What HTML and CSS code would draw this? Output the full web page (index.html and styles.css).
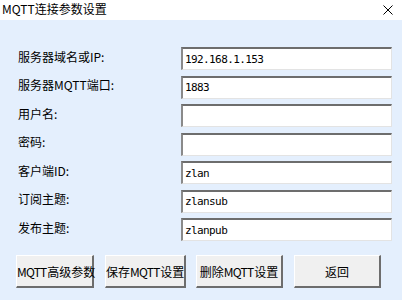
FILE: index.html
```html
<!DOCTYPE html>
<html lang="zh-CN">
<head>
    <meta charset="UTF-8">
    <title>MQTT连接参数设置</title>
    <link rel="stylesheet" href="styles.css">
</head>
<body>
    <div class="dialog">
        <div class="titlebar">
            <span class="title">MQTT连接参数设置</span>
            <svg class="close" width="10" height="10" viewBox="0 0 10 10">
                <path d="M0.5 0.5 L9.5 9.5 M9.5 0.5 L0.5 9.5" stroke="#000" stroke-width="1" fill="none"/>
            </svg>
        </div>

        <div class="content">
            <form class="fields">
                <label for="host">服务器域名或IP:</label>
                <input type="text" id="host" value="192.168.1.153">

                <label for="port">服务器MQTT端口:</label>
                <input type="text" id="port" value="1883">

                <label for="user">用户名:</label>
                <input type="text" id="user" value="">

                <label for="pass">密码:</label>
                <input type="password" id="pass" value="">

                <label for="client">客户端ID:</label>
                <input type="text" id="client" value="zlan">

                <label for="sub">订阅主题:</label>
                <input type="text" id="sub" value="zlansub">

                <label for="pub">发布主题:</label>
                <input type="text" id="pub" value="zlanpub">
            </form>

            <div class="buttons">
                <button class="btn btn-adv"><span class="lat">MQTT</span>高级参数</button>
                <button class="btn btn-save">保存<span class="lat">MQTT</span>设置</button>
                <button class="btn btn-del">删除<span class="lat">MQTT</span>设置</button>
                <button class="btn btn-back">返回</button>
            </div>
        </div>
    </div>
</body>
</html>
```

FILE: styles.css
```css
body {
    margin: 0;
    font-family: "Noto Sans CJK SC", "Liberation Sans", sans-serif;
    font-size: 12px;
    color: #000;
}

.dialog {
    width: 402px;
    height: 300px;
    background: #e4effd;
    display: flex;
    flex-direction: column;
}

.titlebar {
    height: 20px;
    background: #fff;
    display: flex;
    align-items: center;
    justify-content: space-between;
    padding: 0 9px 0 2px;
}

.title {
    font-size: 12px;
    line-height: 20px;
    margin-top: -2px;
}

.close {
    display: block;
    margin-top: -1px;
}

.content {
    padding: 27px 10px 0 18px;
}

.fields {
    display: grid;
    grid-template-columns: 163px 211px;
    grid-auto-rows: 23px;
    row-gap: 5.5px;
    align-items: center;
    margin: 0;
}

.fields label {
    line-height: 14px;
    margin-top: -4px;
}

.fields input {
    box-sizing: border-box;
    height: 23px;
    width: 211px;
    margin: 0;
    padding: 0 2px;
    background: #fff;
    border-style: solid;
    border-width: 2px 1px 1px 2px;
    border-color: #6d6d6d #e3e3e3 #e3e3e3 #8a8a8a;
    font-family: "DejaVu Sans Mono", "Liberation Mono", monospace;
    font-size: 11px;
    letter-spacing: -0.6px;
    color: #000;
    outline: none;
}

.buttons {
    display: flex;
    margin-top: 14px;
    margin-left: -2px;
}

.btn {
    box-sizing: border-box;
    height: 33px;
    padding: 0;
    margin-right: 10px;
    background: #f0f0f0;
    border-style: solid;
    border-width: 1px 2px 2px 1px;
    border-color: #ffffff #6d6d6d #6d6d6d #ffffff;
    font-family: "Noto Sans CJK SC", "Liberation Sans", sans-serif;
    font-size: 12px;
    white-space: nowrap;
    color: #000;
}

.btn .lat {
    letter-spacing: -0.8px;
    margin-right: 0.8px;
}

.btn-adv { width: 78px; margin-right: 11px; }
.btn-save { width: 81px; margin-right: 10px; }
.btn-del { width: 87px; margin-right: 11px; }
.btn-back { width: 87px; }
```
